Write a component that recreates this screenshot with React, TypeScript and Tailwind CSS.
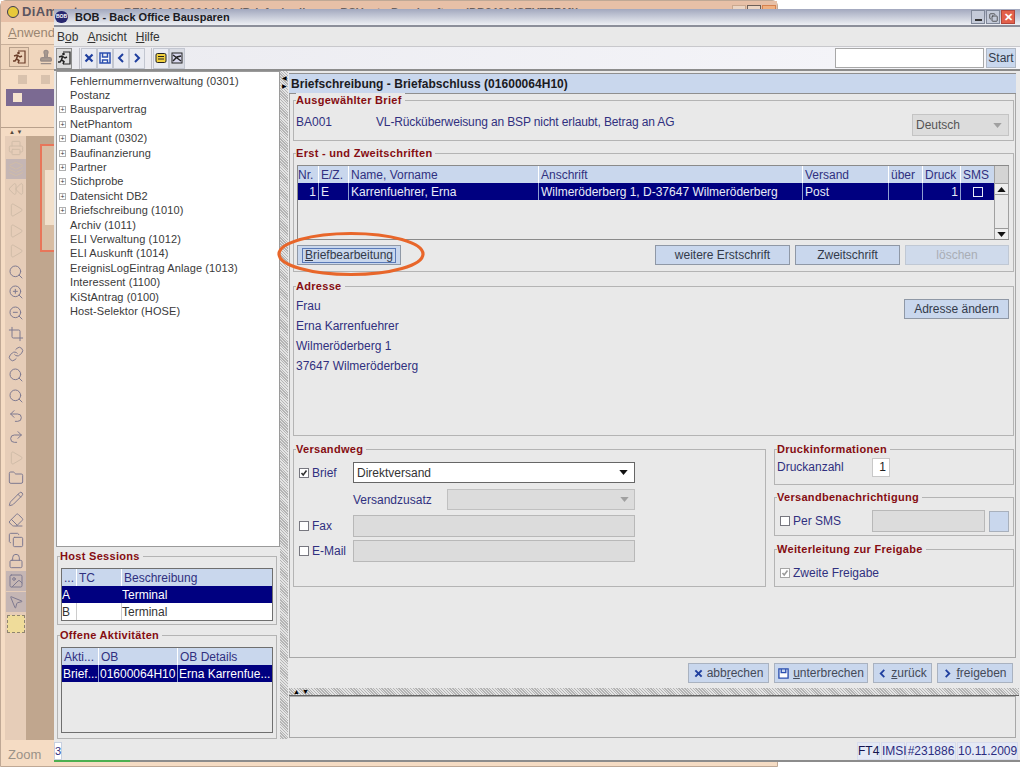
import type { ReactNode } from "react";
import { Search, ZoomIn, ZoomOut, Crop, Undo2, Redo2, Rewind, Play, Folder, Printer, Layers, MousePointer2, Pencil, Eraser, Image, Copy, Link, Lock, Stamp } from "lucide-react";

const TREE = [
  { label: "Fehlernummernverwaltung (0301)", plus: false },
  { label: "Postanz", plus: false },
  { label: "Bausparvertrag", plus: true },
  { label: "NetPhantom", plus: true },
  { label: "Diamant (0302)", plus: true },
  { label: "Baufinanzierung", plus: true },
  { label: "Partner", plus: true },
  { label: "Stichprobe", plus: true },
  { label: "Datensicht DB2", plus: true },
  { label: "Briefschreibung (1010)", plus: true },
  { label: "Archiv (1011)", plus: false },
  { label: "ELI Verwaltung (1012)", plus: false },
  { label: "ELI Auskunft (1014)", plus: false },
  { label: "EreignisLogEintrag Anlage (1013)", plus: false },
  { label: "Interessent (1100)", plus: false },
  { label: "KiStAntrag (0100)", plus: false },
  { label: "Host-Selektor (HOSE)", plus: false },
];

const STRIP_ICONS = [Printer, Layers, Rewind, Play, Play, Play, Search, ZoomIn, ZoomOut, Crop, Link, Search, Search, Undo2, Redo2, Play, Folder, Pencil, Eraser, Copy, Lock, Image, MousePointer2];

function Group({ title, className, children }: { title: string; className: string; children?: ReactNode }) {
  return (
    <div className={`relative border border-[#b4b4b4] ${className}`}>
      <span className="absolute -top-[8px] left-[2px] bg-[#e9e9e9] pr-[3px] text-[11px] font-bold leading-[14px] tracking-[0.3px] text-[#850d12] whitespace-nowrap">
        {title}
      </span>
      {children}
    </div>
  );
}

function Btn({ className, disabled, children }: { className: string; disabled?: boolean; children: ReactNode }) {
  return (
    <div
      className={`flex h-[20px] shrink-0 items-center justify-center gap-[4px] border border-[#8f98a6] bg-[#c9d7ed] text-[12px] whitespace-nowrap ${
        disabled ? "border-[#c0c8d4] bg-[#cfdaeb] text-[#a9adb5]" : "text-[#333a4a]"
      } ${className}`}
    >
      {children}
    </div>
  );
}

function Check({ checked, dim }: { checked?: boolean; dim?: boolean }) {
  return (
    <span className={`flex h-[10px] w-[10px] shrink-0 items-center justify-center border border-[#77777f] bg-white ${dim ? "border-[#a5a5a5] bg-[#dcdcdc]" : ""}`}>
      {checked && (
        <svg viewBox="0 0 8 8" className="h-[8px] w-[8px]">
          <path d="M1.5 4 L3.2 6 L6.5 1.5" fill="none" stroke={dim ? "#9a9a9a" : "#333"} strokeWidth="1.6" />
        </svg>
      )}
    </span>
  );
}

function Arrow({ color = "#111", className = "" }: { color?: string; className?: string }) {
  return (
    <svg viewBox="0 0 10 6" className={`h-[5px] w-[9px] ${className}`}>
      <path d="M0 0 H10 L5 6 Z" fill={color} />
    </svg>
  );
}

function Cell({ w, right, className = "", children }: { w: string; right?: boolean; className?: string; children?: ReactNode }) {
  return (
    <div className={`flex shrink-0 items-center overflow-hidden whitespace-nowrap px-[2px] ${right ? "justify-end" : ""} ${w} ${className}`}>
      {children}
    </div>
  );
}

function ToolIcon({ children, active }: { children: ReactNode; active?: boolean }) {
  return (
    <div className={`flex h-[21px] w-[16px] items-center justify-center border border-[#c3c7d1] ${active ? "bg-[#d9dbe3]" : "bg-[#e9ebf2]"}`}>
      {children}
    </div>
  );
}

// running figure leaving through a door
function ExitIcon({ color }: { color: string }) {
  return (
    <svg viewBox="0 0 14 14" className="h-[14px] w-[14px]">
      <path d="M6 1 H13 V13 H6" fill="none" stroke={color} strokeWidth="1.2" />
      <circle cx="6.5" cy="3" r="1.3" fill={color} />
      <path d="M2 6 L5 5 L8 7 L10 6 M5.5 5.5 L4.5 9 L7 10.5 L6 13 M4.5 9 L3 11 L1 11" fill="none" stroke={color} strokeWidth="1.5" />
    </svg>
  );
}

function BackWindow() {
  return (
    <div className="absolute left-0 top-0 flex h-[767px] w-[778px] flex-col rounded-t-[6px] border border-[#bfa895] bg-[#f5dcc4] text-[#8f7f70]">
      <div className="relative flex h-[21px] shrink-0 items-center bg-[#e7c0a7] pl-[6px] whitespace-nowrap">
        <div className="mr-[3px] h-[12px] w-[12px] shrink-0 rounded-full border border-[#3c3c50] bg-[#e8c93a]" />
        <span className="w-[102px] shrink-0 overflow-hidden text-[13px] font-bold tracking-[0.4px] text-[#5b5560]">DiAmant</span>
        <span className="pt-[1px] text-[11px] font-bold tracking-[0.2px] text-[#6a6060]">BEN 01 100 064 H 10 (Briefschreibung - BSVnet - Druckauftrag (DB2400 ISEVTERM))</span>
        <div className="absolute right-[1px] top-[4px] flex gap-[1px]">
          <div className="h-[12px] w-[14px] border border-[#c9a88f] bg-[#ecd5c3]" />
          <div className="h-[12px] w-[14px] border border-[#6d6058] bg-[#ecd5c3]" />
          <div className="h-[12px] w-[14px] border border-[#d4814f] bg-[#f0b080]" />
        </div>
      </div>
      <div className="flex h-[22px] shrink-0 items-center pl-[7px] text-[13px] text-[#9a8672]">
        <span className="underline decoration-[#9a8672]">A</span>nwendung
      </div>
      <div className="flex h-[26px] shrink-0 items-center gap-[9px] border-y border-[#c9b09a] bg-[#f0d6bd] pl-[8px]">
        <div className="flex h-[20px] w-[20px] items-center justify-center border border-[#b9a18c] bg-[#ecd1b8]">
          <ExitIcon color="#6b3d28" />
        </div>
        <Stamp size={16} color="#9a8d88" fill="#a89a90" />
      </div>
      <div className="flex h-[58px] shrink-0 flex-col border-b border-[#b9a18c] pl-[5px]">
        <div className="flex h-[19px] items-center gap-[14px] pl-[12px]">
          <div className="h-[9px] w-[9px] bg-[#d9c2ad]" />
          <div className="h-[9px] w-[9px] bg-[#d9c2ad]" />
        </div>
        <div className="flex h-[17px] items-center bg-[#7b6a92] pl-[7px]">
          <div className="h-[9px] w-[9px] bg-[#f5e4cf]" />
        </div>
      </div>
      <div className="flex h-[8px] shrink-0 items-center gap-[2px] pl-[8px] text-[6px] leading-none text-[#55483c]">▲ ▼</div>
      <div className="flex min-h-0 flex-1 pl-[4px]">
        <div className="flex w-[21px] shrink-0 flex-col items-center gap-[0.65px] bg-[#e6cdb8] pt-[2px]">
          {STRIP_ICONS.map((Icon, i) => (
            <div key={i} className={`flex h-[20px] w-[20px] items-center justify-center ${i === 1 || i === 21 || i === 22 ? "bg-[#c5b6b4]" : ""}`}>
              <Icon size={16} strokeWidth={1.5} color={i < 6 || i === 15 ? "#d0bca8" : "#7f7a90"} />
            </div>
          ))}
          <div className="mt-[2px] h-[18px] w-[18px] border border-dashed border-[#8f8570] bg-[#efdc9a]" />
        </div>
        <div className="min-w-0 flex-1 bg-[#c0a68e] pt-[8px]">
          <div className="ml-[14px] h-[108px] border-2 border-r-0 border-[#e8765a] bg-[#d8bda3] pl-[3px] pt-[24px]">
            <div className="h-[55px] bg-[#f2e0cb]" />
          </div>
        </div>
      </div>
      <div className="flex h-[26px] shrink-0 items-center pl-[7px] pt-[3px] text-[13px] text-[#9a9288]">Zoom</div>
    </div>
  );
}

export default function App() {
  return (
    <div className="relative h-[768px] w-[1024px] overflow-hidden bg-white font-['Liberation_Sans',Arial,sans-serif] text-[12px] text-[#30307f]">
      <BackWindow />

      {/* BOB window */}
      <div className="absolute left-[54px] top-[9px] flex h-[753px] w-[966px] flex-col bg-[#e9e9e9]">
        <div className="flex h-[18px] shrink-0 items-center border-b-2 border-[#8c8f9a] bg-gradient-to-b from-[#a2a8be] to-[#eef0f4] pl-[1px] pr-[5px]">
          <div className="mr-[7px] flex h-[12px] w-[13px] items-center justify-center rounded-full bg-[#27276f] text-[5px] font-bold text-white">BOB</div>
          <span className="text-[11px] font-bold text-[#1b1b22]">BOB - Back Office Bausparen</span>
          <div className="ml-auto flex gap-px">
            <div className="flex h-[14px] w-[14px] items-end justify-center border border-[#7f8798] bg-[#c4cad8] pb-[2px]">
              <div className="h-[2px] w-[7px] bg-[#333]" />
            </div>
            <div className="flex h-[14px] w-[14px] items-center justify-center border border-[#7f8798] bg-[#c4cad8]">
              <Copy size={9} color="#333" strokeWidth={2} />
            </div>
            <div className="flex h-[14px] w-[14px] items-center justify-center border border-[#b3463a] bg-[#e2604b] text-[11px] font-bold leading-none text-white">✕</div>
          </div>
        </div>
        <div className="flex h-[19px] shrink-0 items-center gap-[9px] pl-[3px] text-[12px] text-[#333]">
          <span>B<span className="underline">o</span>b</span>
          <span><span className="underline">A</span>nsicht</span>
          <span><span className="underline">H</span>ilfe</span>
        </div>
        <div className="flex h-[25px] shrink-0 items-center border-y border-b-2 border-t-[#c8c8cc] border-b-[#8c8c8c] bg-gradient-to-r from-[#ebebf0] to-[#f6f6fa] pl-[2px]">
          <div className="flex h-[21px] w-[16px] items-center justify-center border border-[#8f8f8f] bg-[#dcdcdc]">
            <ExitIcon color="#222" />
          </div>
          <div className="ml-[7px] h-[21px] w-px bg-[#c0c0c8]" />
          <div className="ml-px flex">
            <ToolIcon>
              <svg viewBox="0 0 10 10" className="h-[10px] w-[10px]"><path d="M1.5 1.5 L8.5 8.5 M8.5 1.5 L1.5 8.5" stroke="#1f3f9f" strokeWidth="2.2" /></svg>
            </ToolIcon>
            <ToolIcon>
              <svg viewBox="0 0 12 12" className="h-[12px] w-[12px]"><path d="M1 1 H11 V11 H1 Z M3.5 1 V5 H8.5 V1 M3.5 11 V8 H8.5 V11" fill="#fff" stroke="#2c50b0" strokeWidth="1.5" /></svg>
            </ToolIcon>
            <ToolIcon>
              <svg viewBox="0 0 10 10" className="h-[10px] w-[10px]"><path d="M7 1 L3 5 L7 9" fill="none" stroke="#1f3f9f" strokeWidth="2" /></svg>
            </ToolIcon>
            <ToolIcon>
              <svg viewBox="0 0 10 10" className="h-[10px] w-[10px]"><path d="M3 1 L7 5 L3 9" fill="none" stroke="#1f3f9f" strokeWidth="2" /></svg>
            </ToolIcon>
          </div>
          <div className="ml-[6px] h-[21px] w-px bg-[#c0c0c8]" />
          <div className="ml-px flex">
            <ToolIcon>
              <svg viewBox="0 0 12 12" className="h-[12px] w-[12px]"><rect x="1" y="1.5" width="10" height="9" rx="1.5" fill="#f0d040" stroke="#222" /><path d="M3 4.5 H9 M3 7 H9" stroke="#222" /></svg>
            </ToolIcon>
            <ToolIcon active>
              <svg viewBox="0 0 12 12" className="h-[12px] w-[12px]"><rect x="1" y="1" width="10" height="10" fill="#d8d8ee" stroke="#222" /><path d="M2 3 L10 9 M2 9 L6 5 L10 4" fill="none" stroke="#222" strokeWidth="1.4" /></svg>
            </ToolIcon>
          </div>
          <div className="ml-auto mr-[4px] flex items-center gap-[2px]">
            <div className="h-[20px] w-[149px] border border-[#a8a8a8] bg-white" />
            <Btn className="w-[30px] border-[#b0b8c4]">Start</Btn>
          </div>
        </div>

        <div className="flex min-h-0 flex-1">
          {/* left column */}
          <div className="flex w-[226px] shrink-0 flex-col pl-[2px]">
            <div className="h-[476px] shrink-0 overflow-hidden border border-[#9a9a9a] bg-white pt-[2px] text-[11px] tracking-[0.1px] text-[#3a3a3a]">
              {TREE.map((item) => (
                <div key={item.label} className="flex h-[14.4px] items-center pl-[2px] leading-none whitespace-nowrap">
                  <span className={`mr-[4px] flex h-[7px] w-[7px] shrink-0 items-center justify-center border text-[7px] leading-none ${item.plus ? "border-[#b0b0b0] text-[#333]" : "border-transparent"}`}>
                    {item.plus ? "+" : ""}
                  </span>
                  {item.label}
                </div>
              ))}
            </div>
            <Group title="Host Sessions" className="ml-px mt-[9px] h-[69px] w-[220px] shrink-0 pl-[3px] pr-[3px] pt-[11px]">
              <div className="h-[53px] border border-[#6f6f6f] bg-white">
                <div className="flex h-[17px] bg-[#c9d7ed]">
                  <Cell w="w-[15px]" className="border-r border-white">...</Cell>
                  <Cell w="w-[45px]" className="border-r border-white">TC</Cell>
                  <Cell w="w-[150px]">Beschreibung</Cell>
                </div>
                <div className="flex h-[17px] bg-[#000080] text-white">
                  <Cell w="w-[15px]" className="!px-0">A</Cell>
                  <Cell w="w-[45px]" />
                  <Cell w="w-[150px]" className="!px-0">Terminal</Cell>
                </div>
                <div className="flex h-[17px] text-[#333]">
                  <Cell w="w-[15px]" className="border-r border-[#ccc] !px-0">B</Cell>
                  <Cell w="w-[45px]" className="border-r border-[#ccc]" />
                  <Cell w="w-[150px]" className="!px-0">Terminal</Cell>
                </div>
              </div>
            </Group>
            <Group title="Offene Aktivitäten" className="ml-px mt-[10px] h-[104px] w-[220px] shrink-0 pl-[3px] pr-[3px] pt-[11px]">
              <div className="h-[86px] border border-[#6f6f6f] bg-[#e9e9e9]">
                <div className="flex h-[17px] bg-[#c9d7ed]">
                  <Cell w="w-[37px]" className="border-r border-white">Akti...</Cell>
                  <Cell w="w-[79px]" className="border-r border-white">OB</Cell>
                  <Cell w="w-[94px]">OB Details</Cell>
                </div>
                <div className="flex h-[17px] bg-[#000080] text-white">
                  <Cell w="w-[37px]" className="border-r border-[#8f9fd0] !px-px">Brief...</Cell>
                  <Cell w="w-[79px]" className="border-r border-[#8f9fd0] !px-px">01600064H10</Cell>
                  <Cell w="w-[94px]" className="!px-px">Erna Karrenfue...</Cell>
                </div>
              </div>
            </Group>
          </div>

          {/* vertical splitter */}
          <div className="flex w-[8px] shrink-0 flex-col items-center gap-[2px] bg-[repeating-linear-gradient(45deg,#b4b4b4_0,#b4b4b4_1px,#e4e4e4_1px,#e4e4e4_2px)] pt-[4px] text-[6px] leading-none text-black">
            <span>◀</span>
            <span>▶</span>
          </div>

          {/* right column */}
          <div className="flex min-w-0 flex-1 flex-col pr-[4px] pl-px">
            <div className="mt-[2px] flex h-[21px] shrink-0 items-center border-y border-[#8f8f8f] bg-[#c9d7ed] pl-[2px] text-[12px] font-bold tracking-[0.03px] text-[#1b1b22]">
              Briefschreibung - Briefabschluss (01600064H10)
            </div>
            <div className="flex h-[564px] shrink-0 flex-col border-x border-b border-[#a8a8a8] pl-[3px] pr-px">
              <Group title="Ausgewählter Brief" className="mt-[6px] flex h-[41px] shrink-0 items-start pl-[2px] pr-[4px] pt-[12px]">
                <span className="w-[80px]">BA001</span>
                <span className="text-[12px] tracking-[-0.13px]">VL-Rücküberweisung an BSP nicht erlaubt, Betrag an AG</span>
                <div className="ml-auto mt-px flex h-[22px] w-[97px] items-center justify-between border border-[#c4c4c4] bg-[#dcdcdc] pl-[3px] pr-[6px] text-[#555]">
                  Deutsch
                  <Arrow color="#a0a0a0" />
                </div>
              </Group>

              <Group title="Erst - und Zweitschriften" className="mt-[12px] h-[119px] shrink-0 pl-[3px] pr-[4px] pt-[11px]">
                <div className="flex h-[75px] border-b border-t border-[#8a8a8a]">
                  <div className="w-[697px] border-l border-[#8a8a8a]">
                    <div className="flex h-[17px] bg-[#c9d7ed]">
                      <Cell w="w-[21px]" className="border-r border-white !pl-0">Nr.</Cell>
                      <Cell w="w-[30px]" className="border-r border-white">E/Z.</Cell>
                      <Cell w="w-[190px]" className="border-r border-white">Name, Vorname</Cell>
                      <Cell w="w-[264px]" className="border-r border-white">Anschrift</Cell>
                      <Cell w="w-[86px]" className="border-r border-white">Versand</Cell>
                      <Cell w="w-[34px]" className="border-r border-white">über</Cell>
                      <Cell w="w-[38px]" className="border-r border-white">Druck</Cell>
                      <Cell w="w-[33px]">SMS</Cell>
                    </div>
                    <div className="flex h-[17px] bg-[#000080] text-[#e8ecf8]">
                      <Cell w="w-[21px]" right className="border-r border-[#8f9fd0]">1</Cell>
                      <Cell w="w-[30px]" className="border-r border-[#8f9fd0]">E</Cell>
                      <Cell w="w-[190px]" className="border-r border-[#8f9fd0]">Karrenfuehrer, Erna</Cell>
                      <Cell w="w-[264px]" className="border-r border-[#8f9fd0]">Wilmeröderberg 1, D-37647 Wilmeröderberg</Cell>
                      <Cell w="w-[86px]" className="border-r border-[#8f9fd0]">Post</Cell>
                      <Cell w="w-[34px]" className="border-r border-[#8f9fd0]" />
                      <Cell w="w-[38px]" right className="border-r border-[#8f9fd0]">1</Cell>
                      <Cell w="w-[33px]" className="justify-center">
                        <span className="h-[10px] w-[10px] border-[1.5px] border-[#e8ecf8]" />
                      </Cell>
                    </div>
                  </div>
                  <div className="flex w-[15px] shrink-0 flex-col border-x border-[#a0a0a0]">
                    <div className="h-[17px] bg-[#d4d4d4]" />
                    <div className="flex h-[12px] items-center justify-center border-y border-[#9a9a9a] bg-[#eeeeee]">
                      <Arrow className="rotate-180" />
                    </div>
                    <div className="flex-1" />
                    <div className="flex h-[11px] items-center justify-center border-t border-[#9a9a9a] bg-[#eeeeee]">
                      <Arrow />
                    </div>
                  </div>
                </div>
                <div className="mt-[5px] flex gap-[5px]">
                  <Btn className="mr-[249px] w-[104px]">
                    <span className="border border-[#5a7ab8] px-[2px] leading-[13px]"><span className="underline">B</span>riefbearbeitung</span>
                  </Btn>
                  <Btn className="w-[135px]">weitere Erstschrift</Btn>
                  <Btn className="w-[105px]">Zweitschrift</Btn>
                  <Btn disabled className="w-[104px]">löschen</Btn>
                </div>
              </Group>

              <Group title="Adresse" className="mt-[14px] flex h-[150px] shrink-0 justify-between pl-[2px] pr-[4px] pt-[12px]">
                <div className="flex flex-col gap-[6px] leading-[14px]">
                  <span>Frau</span>
                  <span>Erna Karrenfuehrer</span>
                  <span>Wilmeröderberg 1</span>
                  <span>37647 Wilmeröderberg</span>
                </div>
                <Btn className="w-[105px]">Adresse ändern</Btn>
              </Group>

              <div className="mt-[13px] flex gap-[8px]">
                <Group title="Versandweg" className="h-[138px] w-[473px] shrink-0 pl-[5px] pt-[12px]">
                  <div className="flex h-[21px] items-center">
                    <Check checked />
                    <span className="ml-[3px] w-[41px]">Brief</span>
                    <div className="flex h-[21px] w-[282px] items-center justify-between border border-[#666] bg-white pl-[3px] pr-[6px] text-[#333]">
                      Direktversand
                      <Arrow />
                    </div>
                  </div>
                  <div className="mt-[6px] flex h-[21px] items-center">
                    <span className="ml-[54px] w-[94px]">Versandzusatz</span>
                    <div className="flex h-[21px] w-[188px] items-center justify-end border border-[#c0c0c0] bg-[#dcdcdc] pr-[5px]">
                      <Arrow color="#a0a0a0" />
                    </div>
                  </div>
                  <div className="mt-[5px] flex h-[22px] items-center">
                    <Check />
                    <span className="ml-[3px] w-[41px]">Fax</span>
                    <div className="h-[22px] w-[282px] border border-[#b8b8b8] bg-[#dcdcdc]" />
                  </div>
                  <div className="mt-[3px] flex h-[22px] items-center">
                    <Check />
                    <span className="ml-[3px] w-[41px]">E-Mail</span>
                    <div className="h-[22px] w-[282px] border border-[#b8b8b8] bg-[#dcdcdc]" />
                  </div>
                </Group>
                <div className="flex w-[240px] shrink-0 flex-col">
                  <Group title="Druckinformationen" className="flex h-[36px] items-center pl-[2px]">
                    <span className="w-[95px]">Druckanzahl</span>
                    <div className="flex h-[19px] w-[18px] items-center justify-end border border-[#c8c8c8] bg-white pr-[3px] text-[#222]">1</div>
                  </Group>
                  <Group title="Versandbenachrichtigung" className="mt-[12px] flex h-[39px] items-center pl-[5px] pt-[9px]">
                    <Check />
                    <span className="ml-[3px] w-[79px]">Per SMS</span>
                    <div className="h-[22px] w-[113px] border border-[#b8b8b8] bg-[#dcdcdc]" />
                    <div className="ml-[4px] h-[21px] w-[20px] border border-[#a8b0bc] bg-[#c9d7ed]" />
                  </Group>
                  <Group title="Weiterleitung zur Freigabe" className="mt-[13px] flex h-[38px] items-center pl-[5px] pt-[9px]">
                    <Check checked dim />
                    <span className="ml-[3px]">Zweite Freigabe</span>
                  </Group>
                </div>
              </div>
            </div>

            <div className="flex h-[30px] shrink-0 items-center justify-end gap-[5px] pr-[3px]">
              <Btn className="w-[81px] border-[#a9b2c0] text-[#444a58]">
                <svg viewBox="0 0 10 10" className="h-[9px] w-[9px]"><path d="M1.5 1.5 L8.5 8.5 M8.5 1.5 L1.5 8.5" stroke="#1f3f9f" strokeWidth="2.2" /></svg>
                <span>abb<span className="underline">r</span>echen</span>
              </Btn>
              <Btn className="w-[94px] border-[#a9b2c0] text-[#444a58]">
                <svg viewBox="0 0 12 12" className="h-[11px] w-[11px]"><path d="M1 1 H11 V11 H1 Z M3.5 1 V5 H8.5 V1" fill="#fff" stroke="#2c50b0" strokeWidth="1.5" /></svg>
                <span><span className="underline">u</span>nterbrechen</span>
              </Btn>
              <Btn className="w-[59px] border-[#a9b2c0] text-[#444a58]">
                <svg viewBox="0 0 10 10" className="h-[9px] w-[9px]"><path d="M7 1 L3 5 L7 9" fill="none" stroke="#1f3f9f" strokeWidth="2" /></svg>
                <span><span className="underline">z</span>urück</span>
              </Btn>
              <Btn className="w-[76px] border-[#a9b2c0] text-[#444a58]">
                <svg viewBox="0 0 10 10" className="h-[9px] w-[9px]"><path d="M3 1 L7 5 L3 9" fill="none" stroke="#1f3f9f" strokeWidth="2" /></svg>
                <span><span className="underline">f</span>reigeben</span>
              </Btn>
            </div>
            <div className="-mr-[3px] flex h-[8px] shrink-0 items-center gap-[2px] border-b border-[#666] bg-[repeating-linear-gradient(45deg,#b4b4b4_0,#b4b4b4_1px,#e4e4e4_1px,#e4e4e4_2px)] pl-[4px] text-[7px] leading-none text-black">
              <span>▲</span>
              <span>▼</span>
            </div>
            <div className="h-[42px] shrink-0 border border-[#a8a8a8]" />
          </div>
        </div>

        {/* status bar */}
        <div className="relative mt-[3px] flex h-[18px] shrink-0 items-center pr-[2px]">
          <div className="flex h-[18px] w-[8px] items-center justify-center border border-[#c8d0e0] bg-white text-[11px]">3</div>
          <div className="ml-auto flex gap-px text-[12px] leading-[16px] text-[#2c2c80]">
            <div className="w-[23px] border border-[#d8dcec] bg-[#e4e9f5] text-center text-[#14144f]">FT4</div>
            <div className="w-[24px] border border-[#d8dcec] bg-[#e4e9f5] text-center">IMSI</div>
            <div className="w-[50px] border border-[#d8dcec] bg-[#e4e9f5] text-center">#231886</div>
            <div className="w-[61px] border border-[#d8dcec] bg-[#e4e9f5] text-center">10.11.2009</div>
          </div>
        </div>
        <div className="flex h-[2px] shrink-0 bg-[#8c8c8c]">
          <div className="w-[76px] bg-[#4caf50]" />
        </div>
      </div>

      {/* highlight ring drawn over the screenshot */}
      <svg className="pointer-events-none absolute left-[276px] top-[230px] h-[48px] w-[150px]" viewBox="0 0 150 48">
        <ellipse cx="75" cy="24" rx="72" ry="20.5" fill="none" stroke="#e8662a" strokeWidth="3.2" />
      </svg>
    </div>
  );
}
